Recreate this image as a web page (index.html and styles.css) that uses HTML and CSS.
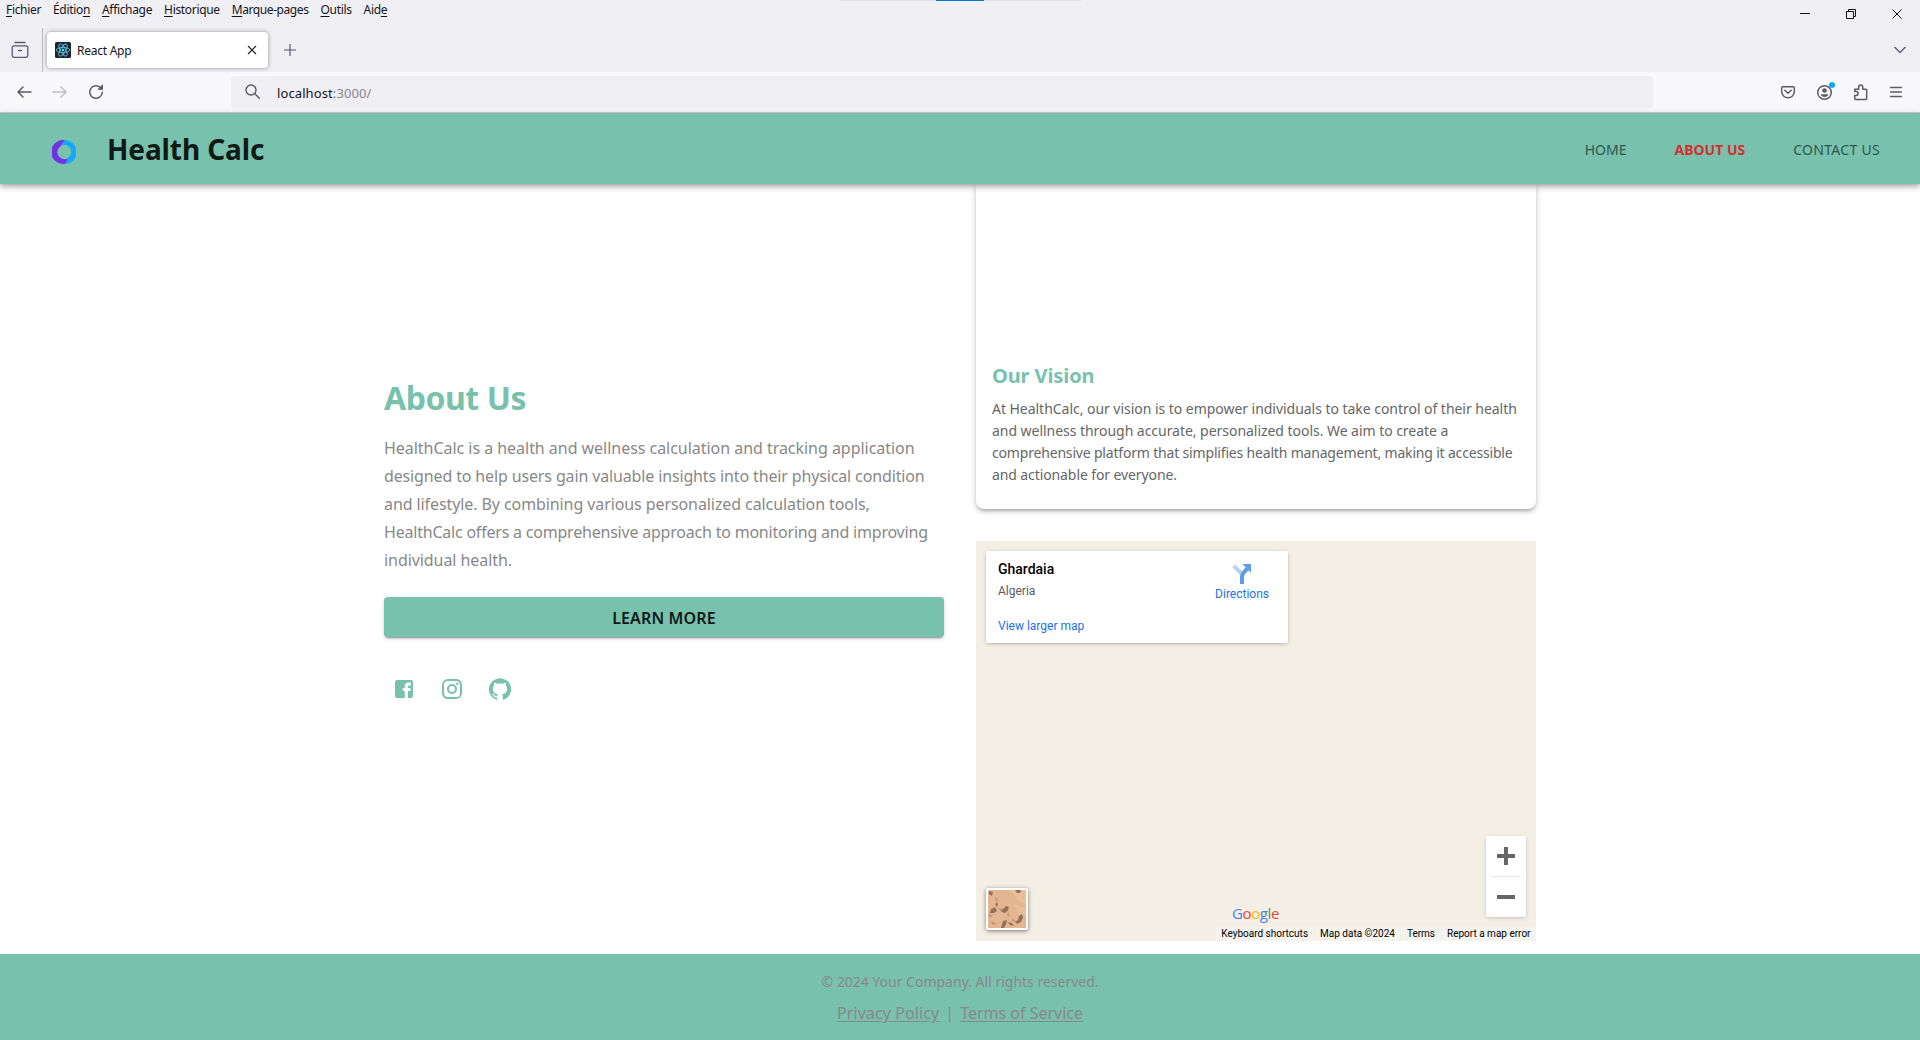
FILE: index.html
```html
<!DOCTYPE html>
<html lang="en">
<head>
<meta charset="utf-8">
<title>React App</title>
<link rel="stylesheet" href="styles.css">
</head>
<body>
<div class="window">
  <div class="chrome">
    <div class="menubar">
      <nav class="menus">
        <span><u>F</u>ichier</span><span>Éditio<u>n</u></span><span><u>A</u>ffichage</span><span><u>H</u>istorique</span><span class="m5"><u>M</u>arque-pages</span><span><u>O</u>utils</span><span>Aid<u>e</u></span>
      </nav>
      <div class="snap"><i></i></div>
      <svg class="winctl" width="130" height="24" viewBox="0 0 130 24" fill="none" stroke="#111" stroke-width="1"><path d="M10 13.500h10"/><path d="M56.500 11.500h7v7h-7zM58.500 11.500v-2h7v7h-2"/><path d="M102.500 9.500l9 9m0-9l-9 9"/></svg>
    </div>
    <div class="tabbar">
      <svg class="recent" width="18" height="18" viewBox="0 0 18 18" fill="none" stroke="#5b5b66" stroke-width="1.300" stroke-linecap="round"><path d="M4 1.500h10"/><path d="M3 4.800h12a1.800 1.800 0 0 1 1.800 1.800v8a1.800 1.800 0 0 1-1.800 1.800H3a1.800 1.800 0 0 1-1.800-1.800v-8A1.800 1.800 0 0 1 3 4.800zM7.500 9.500h3"/></svg>
      <span class="sep"></span>
      <div class="tab">
        <svg width="16" height="16" viewBox="0 0 16 16" fill="none"><rect width="16" height="16" rx="1.500" fill="#20232a"/><g stroke="#53c1de" stroke-width=".9"><ellipse cx="8" cy="8" rx="6.800" ry="2.600"/><ellipse cx="8" cy="8" rx="6.800" ry="2.600" transform="rotate(60 8 8)"/><ellipse cx="8" cy="8" rx="6.800" ry="2.600" transform="rotate(120 8 8)"/></g><circle cx="8" cy="8" r="1.300" fill="#61dafb"/></svg>
        <span class="tabname">React App</span>
        <svg class="tabclose" width="10" height="10" viewBox="0 0 10 10" stroke="#222" stroke-width="1.200"><path d="M1 1l8 8M9 1l-8 8"/></svg>
      </div>
      <svg class="plus" width="12" height="12" viewBox="0 0 12 12" stroke="#5b5b66" stroke-width="1.200"><path d="M6 0v12M0 6h12"/></svg>
      <svg class="chev" width="12" height="8" viewBox="0 0 12 8" fill="none" stroke="#5b5b66" stroke-width="1.300"><path d="M.5 1L6 6.500 11.500 1"/></svg>
    </div>
    <div class="toolbar">
      <svg class="navs" width="90" height="20" viewBox="0 0 90 20" fill="none" stroke="#5b5b66" stroke-width="1.500" stroke-linecap="round" stroke-linejoin="round"><path d="M15 10H2M7 5l-5 5 5 5"/><path stroke="#bdbdc3" d="M37 10h13M45 5l5 5-5 5"/><path d="M85 6.200a6.300 6.300 0 1 0 1.300 4"/><path d="M86.500 3.300v4h-4z" fill="#5b5b66" stroke-width="1"/></svg>
      <div class="url">
        <svg width="16" height="16" viewBox="0 0 16 16" fill="none" stroke="#5b5b66" stroke-width="1.400" stroke-linecap="round"><circle cx="6" cy="6" r="5"/><path d="M9.800 9.800l4.500 4.500"/></svg>
        <span class="addr">localhost<em>:3000/</em></span>
      </div>
      <svg class="tools" width="130" height="24" viewBox="0 0 130 24" fill="none" stroke="#5b5b66" stroke-width="1.500" stroke-linecap="round" stroke-linejoin="round"><path d="M3 6.700h10a1.300 1.300 0 0 1 1.300 1.300v3.500a6.300 6.300 0 0 1-12.600 0V8A1.300 1.300 0 0 1 3 6.700z"/><path d="M4.800 10.200L8 13.200l3.200-3"/><circle cx="44.500" cy="12.500" r="6.800"/><circle cx="44.500" cy="10.500" r="2.300" fill="#5b5b66" stroke="none"/><path d="M40.700 14.200h7.600c-.6 3.600-7 3.600-7.600 0z" fill="#5b5b66" stroke="none"/><circle cx="52" cy="5" r="3" fill="#00aef5" stroke="none"/><path d="M74.700 9.200h4V7a2 2 0 0 1 4 0v2.200h2.800a1.200 1.200 0 0 1 1.200 1.200v7.900a1.200 1.200 0 0 1-1.200 1.200h-9.600a1.200 1.200 0 0 1-1.200-1.200v-2.900h1.500a1.900 1.900 0 0 0 0-3.800h-1.500z"/><path d="M110.500 7.500h11M110.500 12h11M110.500 16.500h11" stroke-width="1.300"/></svg>
    </div>
  </div>

  <header class="appbar">
    <svg class="logo" width="24" height="24" viewBox="0 0 24 24"><path fill="#7230e8" d="M13.500.2A12 12 0 1 0 13.200 23.800C15.500 22.500 16 20.500 14.500 18.800A7 7 0 0 1 9 6C9.500 3.500 11 1.500 13.500.2z"/><path fill="#14a7ff" d="M13.500.2A11.900 11.900 0 0 1 12 24C14.500 22.500 15.500 20.500 15 18.300A7 7 0 0 0 9.300 5.500C10 3 11.500 1.200 13.500.2z"/></svg>
    <h1 class="brand">Health Calc</h1>
    <nav class="links"><a>HOME</a><a class="active">ABOUT US</a><a class="contact">CONTACT US</a></nav>
  </header>

  <main class="content">
    <section class="about">
      <h2>About Us</h2>
      <p class="lead"><span class="a1">HealthCalc is a health and wellness calculation and tracking application</span><br><span class="a2">designed to help users gain valuable insights into their physical condition</span><br><span class="a3">and lifestyle. By combining various personalized calculation tools,</span><br><span class="a4">HealthCalc offers a comprehensive approach to monitoring and improving</span><br><span class="a5">individual health.</span></p>
      <button class="learn">LEARN MORE</button>
      <div class="social">
        <svg viewBox="0 0 24 24"><path d="M5 3h14a2 2 0 0 1 2 2v14a2 2 0 0 1-2 2h-3v-7h2.500v-3H16V9.500c0-.8.700-1 1.500-1h1.300V5.500H16.500C14 5.500 12.800 7 12.800 9.300V11h-2v3h2v7H5a2 2 0 0 1-2-2V5a2 2 0 0 1 2-2z"/></svg>
        <svg viewBox="0 0 24 24"><path d="M7.800 2h8.400C19.400 2 22 4.600 22 7.800v8.400a5.800 5.800 0 0 1-5.800 5.800H7.800C4.600 22 2 19.400 2 16.200V7.800A5.800 5.800 0 0 1 7.800 2m-.2 2A3.600 3.600 0 0 0 4 7.600v8.800C4 18.390 5.610 20 7.600 20h8.800a3.600 3.600 0 0 0 3.600-3.600V7.600C20 5.610 18.390 4 16.400 4H7.600m9.650 1.500a1.250 1.250 0 1 1 0 2.500 1.250 1.250 0 0 1 0-2.500M12 7a5 5 0 1 1 0 10 5 5 0 0 1 0-10m0 2a3 3 0 1 0 0 6 3 3 0 0 0 0-6z"/></svg>
        <svg viewBox="0 0 24 24"><path d="M12 1.270a11 11 0 0 0-3.480 21.460c.55.090.73-.28.730-.55v-1.840c-3.030.64-3.670-1.460-3.670-1.460-.55-1.290-1.280-1.650-1.280-1.650-.92-.65.100-.65.100-.65 1.100 0 1.730 1.100 1.730 1.100.92 1.650 2.570 1.200 3.210.92a2 2 0 0 1 .64-1.470c-2.470-.27-5.040-1.190-5.040-5.500 0-1.100.46-2.100 1.200-2.840a3.760 3.760 0 0 1 0-2.930s.91-.28 3.110 1.100c1.800-.49 3.700-.49 5.500 0 2.100-1.380 3.020-1.100 3.020-1.100a3.760 3.760 0 0 1 .1 2.930c.83.740 1.200 1.740 1.200 2.940 0 4.210-2.570 5.130-5.040 5.400.45.370.82.920.82 2.020v3.030c0 .27.100.64.730.55A11 11 0 0 0 12 1.270"/></svg>
      </div>
    </section>

    <section class="side">
      <article class="vision">
        <h3>Our Vision</h3>
        <p><span class="v1">At HealthCalc, our vision is to empower individuals to take control of their health</span><br><span class="v2">and wellness through accurate, personalized tools. We aim to create a</span><br><span class="v3">comprehensive platform that simplifies health management, making it accessible</span><br><span class="v4">and actionable for everyone.</span></p>
      </article>
      <div class="map">
        <div class="place">
          <div class="place-text"><b>Ghardaia</b><span>Algeria</span><a>View larger map</a></div>
          <div class="directions">
            <svg width="20" height="22" viewBox="0 0 20 22"><path d="M1.800 2.800L10 11" stroke="#b5d4f8" stroke-width="4"/><path d="M10 21v-7c0-3 1-4 5.500-8.500" fill="none" stroke="#5c9ee8" stroke-width="4"/><path d="M10.500 1H19v9z" fill="#5c9ee8"/></svg>
            <a>Directions</a>
          </div>
        </div>
        <div class="zoomctl"><svg width="40" height="81" viewBox="0 0 40 81"><path d="M11 20h18M20 11v18M11 61h18" stroke="#666" stroke-width="4"/><path d="M5 40.500h30" stroke="#e6e6e6"/></svg></div>
        <svg class="sat" width="38" height="38" viewBox="0 0 38 38"><rect width="38" height="38" fill="#e3b591"/><path d="M22 0h16v14l-7-3zM26 14l12 4v8l-8-2z" fill="#e8c097"/><path d="M1 1l4 1-1 4-3-2zM27 0h6l-1 3-3 0zM7 14l2-2 1 3-1 2zM3 19l4-2 2 4-3 2-4 0zM12 20l3-1 3-3 3 1-1 3-3 3-3-1zM31 26l3-2 1 4-2 4-4 2-2-2 3-2zM15 31l4-1-1 4-2 4h-3zM20 32l4 1 2 3-4-1z" fill="#94705b"/><path d="M8 7l3 5-4-2zM0 24l5 1-3 3zM9 18l6 1-2 2zM20 21l2 6-3-2zM3 31l6 3-5 1zM24 28l4 3-3 1z" fill="#c4977a"/></svg>
        <div class="google"><span class="b">G</span><span class="r">o</span><span class="y">o</span><span class="b">g</span><span class="g">l</span><span class="r">e</span></div>
        <div class="attrib"><span>Keyboard shortcuts</span><span>Map data ©2024</span><span>Terms</span><span>Report a map error</span></div>
      </div>
    </section>
  </main>

  <footer class="foot">
    <p class="copy">© 2024 Your Company. All rights reserved.</p>
    <p class="legal"><a class="privacy">Privacy Policy</a><span>|</span><a>Terms of Service</a></p>
  </footer>
</div>
</body>
</html>
```
FILE: styles.css
```css
* { box-sizing: border-box; }
body { margin: 0; background: #fff; font-family: "Noto Sans", sans-serif; }
h1, h2, h3, p { margin: 0; }
svg { display: block; flex: none; }
.window { width: 1920px; height: 1040px; overflow: hidden; display: flex; flex-direction: column; }
.chrome { flex: none; height: 113px; background: #f0eff4; border-bottom: 1px solid #ccccce; }
.menubar { height: 28px; display: flex; justify-content: space-between; font-size: 12px; line-height: 20px; color: #15141a; }
.menus { display: flex; gap: 12px; padding-left: 6px; width: 840px; letter-spacing: -.33px; white-space: nowrap; }
.menus .m5 { letter-spacing: -.42px; }
.menus u { text-underline-offset: 2px; }
.snap { width: 241px; height: 1px; background: #e4e4e4; }
.snap i { display: block; width: 48px; height: 1px; margin-left: 96px; background: #0078d7; }
.winctl { margin-left: auto; }
.tabbar { height: 44px; display: flex; align-items: center; padding-right: 14px; }
.recent { margin-left: 11px; }
.sep { width: 1px; height: 44px; background: #b9b9c0; margin-left: 13px; }
.tab { width: 221px; height: 36px; margin-left: 4px; background: #fff; border-radius: 4px; box-shadow: 0 0 4px rgba(0,0,0,.4); display: flex; align-items: center; padding: 0 11px 0 8px; font-size: 12px; color: #15141a; }
.tabname { margin-left: 6px; letter-spacing: -.25px; }
.tabclose { margin-left: auto; }
.plus { margin-left: 16px; }
.chev { margin-left: auto; }
.toolbar { height: 40px; background: #f9f9fb; display: flex; align-items: center; }
.navs { margin-left: 16px; }
.url { margin-left: 125px; width: 1422px; height: 32px; border-radius: 4px; background: #f0eff4; display: flex; align-items: center; padding-left: 14px; font-size: 13px; color: #15141a; }
.addr { margin-left: 16px; padding-top: 1px; letter-spacing: .1px; }
.addr em { font-style: normal; color: #85858d; }
.tools { margin-left: 127px; }

.appbar { flex: none; height: 71px; background: #78c2ad; box-shadow: 0 2px 4px -1px rgba(0,0,0,.2), 0 4px 5px rgba(0,0,0,.14), 0 1px 10px rgba(0,0,0,.12); display: flex; align-items: center; position: relative; color: #0f1a17; }
.logo { margin: 7px 0 0 52px; }
.brand { margin-left: 31px; font-size: 28px; line-height: 40px; font-weight: 700; letter-spacing: -.1px; }
.links { margin-left: auto; display: flex; gap: 48px; padding-right: 40px; margin-top: 1px; font-size: 14px; color: #30564b; }
.links .active { color: #d32f2f; font-weight: 700; }
.links .contact { letter-spacing: .3px; }

.content { height: 770px; flex: none; display: flex; gap: 32px; padding-left: 384px; }
.about { width: 560px; padding-top: 193px; white-space: nowrap; }
.about h2 { font-size: 32px; line-height: 42px; color: #78c2ad; letter-spacing: -.45px; }
.lead { margin-top: 15px; font-size: 16px; line-height: 28px; color: #888; }
.a1 { letter-spacing: -.034px; }
.a2 { letter-spacing: -.139px; }
.a3 { letter-spacing: -.09px; }
.a4 { letter-spacing: -.21px; }
.a5 { letter-spacing: -.07px; }
.learn { margin-top: 23px; width: 560px; height: 40px; border: 0; border-radius: 4px; background: #78c2ad; box-shadow: 0 3px 1px -2px rgba(0,0,0,.2), 0 2px 2px rgba(0,0,0,.14), 0 1px 5px rgba(0,0,0,.12); font: 600 16px/40px "Noto Sans", sans-serif; letter-spacing: .15px; padding: 1px 0 0; color: #0f1a17; display: block; }
.social { display: flex; gap: 24px; padding: 40px 0 0 8px; }
.social svg { width: 24px; height: 24px; fill: #78c2ad; }
.side { width: 560px; white-space: nowrap; }
.vision { height: 325px; border-radius: 0 0 8px 8px; box-shadow: 0 3px 3px -2px rgba(0,0,0,.2), 0 3px 4px rgba(0,0,0,.14), 0 1px 8px rgba(0,0,0,.12); padding: 176px 16px 0; }
.vision h3 { font-size: 20px; line-height: 32px; color: #78c2ad; letter-spacing: -.1px; }
.vision p { margin-top: 6px; font-size: 14px; line-height: 22px; color: #666; }
.v1 { letter-spacing: -.037px; }
.v2 { letter-spacing: -.04px; }
.v3 { letter-spacing: -.18px; }
.v4 { letter-spacing: -.1px; }
.map { position: relative; margin-top: 32px; height: 400px; background: #f4efe4; font-family: Roboto, sans-serif; }
.place { position: absolute; left: 10px; top: 10px; width: 302px; height: 92px; background: #fff; border-radius: 2px; box-shadow: 0 1px 4px -1px rgba(0,0,0,.4); display: flex; justify-content: space-between; padding: 9px 19px 0 12px; font-size: 12px; }
.place a { color: #1a73e8; }
.place-text { display: flex; flex-direction: column; color: #5b5b5b; }
.place-text b { font-size: 14px; font-weight: 500; line-height: 18px; color: #000; }
.place-text span { line-height: 14px; margin-top: 6px; }
.place-text a { line-height: 14px; margin-top: 21px; }
.directions { display: flex; flex-direction: column; align-items: center; padding-top: 3px; }
.directions a { line-height: 14px; margin-top: 2px; }
.zoomctl { position: absolute; right: 10px; top: 295px; width: 40px; height: 81px; background: #fff; border-radius: 2px; box-shadow: 0 1px 4px -1px rgba(0,0,0,.3); }
.sat { position: absolute; left: 10px; top: 347px; width: 42px; height: 42px; border: 2px solid #fff; border-radius: 3px; box-shadow: 0 1px 4px rgba(0,0,0,.5); }
.google { position: absolute; left: 256px; top: 362px; font: 500 15px/20px "Open Sans", sans-serif; letter-spacing: -.4px; }
.b { color: #4285f4; }
.r { color: #ea4335; }
.y { color: #fbbc05; }
.g { color: #34a853; }
.attrib { position: absolute; right: 0; bottom: 0; display: flex; gap: 1px; font-size: 10px; line-height: 14px; color: #000; }
.attrib span { background: #f5f3ee; padding: 0 5.500px; }

.foot { flex: none; height: 86px; background: #78c2ad; color: #888; text-align: center; padding-top: 17px; }
.copy { font-size: 14px; line-height: 22px; }
.legal { font-size: 16px; line-height: 28px; margin-top: 6px; display: flex; justify-content: center; gap: 6px; }
.legal a { text-decoration: underline; text-underline-offset: 2px; }
.legal .privacy { letter-spacing: .1px; }
```
